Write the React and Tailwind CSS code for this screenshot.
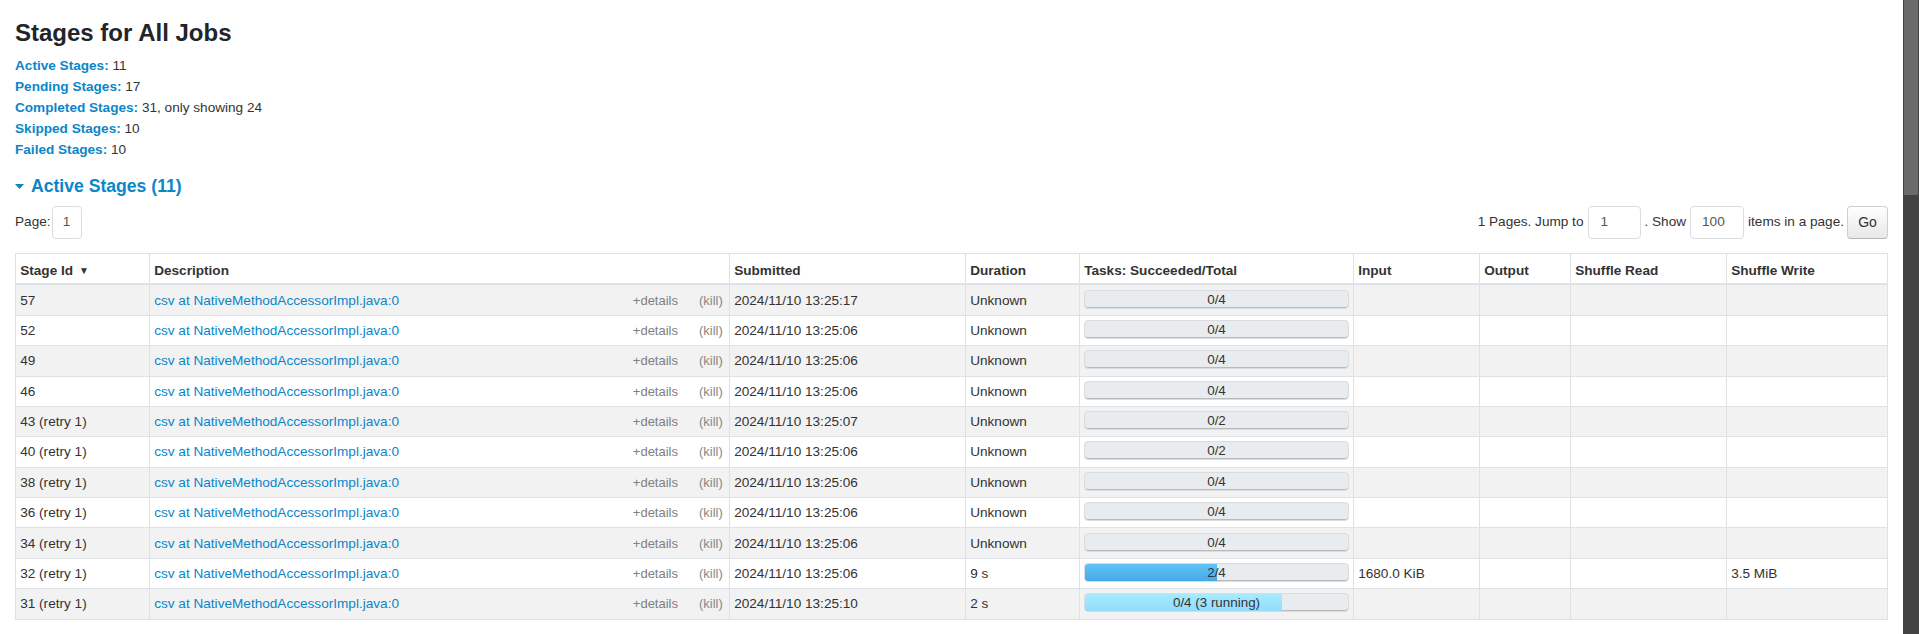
import React from "react";

const rows = [
  { id: "57", time: "2024/11/10 13:25:17", dur: "Unknown", tasks: "0/4" },
  { id: "52", time: "2024/11/10 13:25:06", dur: "Unknown", tasks: "0/4" },
  { id: "49", time: "2024/11/10 13:25:06", dur: "Unknown", tasks: "0/4" },
  { id: "46", time: "2024/11/10 13:25:06", dur: "Unknown", tasks: "0/4" },
  { id: "43 (retry 1)", time: "2024/11/10 13:25:07", dur: "Unknown", tasks: "0/2" },
  { id: "40 (retry 1)", time: "2024/11/10 13:25:06", dur: "Unknown", tasks: "0/2" },
  { id: "38 (retry 1)", time: "2024/11/10 13:25:06", dur: "Unknown", tasks: "0/4" },
  { id: "36 (retry 1)", time: "2024/11/10 13:25:06", dur: "Unknown", tasks: "0/4" },
  { id: "34 (retry 1)", time: "2024/11/10 13:25:06", dur: "Unknown", tasks: "0/4" },
  { id: "32 (retry 1)", time: "2024/11/10 13:25:06", dur: "9 s", tasks: "2/4", done: 50, input: "1680.0 KiB", sw: "3.5 MiB" },
  { id: "31 (retry 1)", time: "2024/11/10 13:25:10", dur: "2 s", tasks: "0/4 (3 running)", running: 75 },
];

const summary = [
  ["Active Stages:", "11"],
  ["Pending Stages:", "17"],
  ["Completed Stages:", "31, only showing 24"],
  ["Skipped Stages:", "10"],
  ["Failed Stages:", "10"],
];

const headers = [
  "Stage Id",
  "Description",
  "Submitted",
  "Duration",
  "Tasks: Succeeded/Total",
  "Input",
  "Output",
  "Shuffle Read",
  "Shuffle Write",
];
const widths = [134, 580, 236, 114, 274, 126, 91, 156, 161];

function Progress({ text, done, running }) {
  return (
    <div className="relative h-[19px] rounded-[4px] bg-[#e9ecef] border border-[#dadde0] shadow-[inset_0_-1px_0_#b8bbbe] overflow-hidden">
      {done ? (
        <div
          className="absolute left-0 top-0 bottom-0 bg-gradient-to-b from-[#60c4f9] to-[#46a8e6]"
          style={{ width: `${done}%` }}
        />
      ) : null}
      {running ? (
        <div
          className="absolute left-0 top-0 bottom-0 bg-gradient-to-b from-[#a6ebfe] to-[#94dcfc]"
          style={{ width: `${running}%` }}
        />
      ) : null}
      <div className="relative text-center leading-[18px] text-[13.4px] text-[#333]">{text}</div>
    </div>
  );
}

export default function App() {
  const link = "text-[#0a86c9]";
  const cellBase = "border border-[#dee2e6] px-[4.2px] leading-[21px] align-top";
  const cell = `${cellBase} py-[4.2px]`;
  return (
    <div className="flex h-[634px] overflow-hidden bg-white [font-family:'Liberation_Sans',Arial,sans-serif] text-[13.6px] text-[#333]">
      <div className="flex-1 min-w-0 px-[15px] pt-[18px]">
        <h3 className="text-[24px] font-bold leading-[29px] text-[#212529] mb-[8px]">Stages for All Jobs</h3>
        <ul>
          {summary.map(([k, v]) => (
            <li key={k} className="leading-[21px]">
              <span className={`${link} font-bold`}>{k}</span> {v}
            </li>
          ))}
        </ul>
        <div className={`mt-[14px] flex items-center h-[24px] ${link}`}>
          <svg width="9" height="6" viewBox="0 0 9 6" className="mr-[7px] mt-[2px]">
            <polygon points="0,0 9,0 4.5,5" fill="#0a86c9" />
          </svg>
          <span className="text-[17.6px] font-bold">Active Stages (11)</span>
        </div>
        <div className="mt-[8px] flex items-center h-[33px]">
          <span>Page:</span>
          <div className="ml-[1px] w-[30px] h-[33px] rounded-[4px] border border-[#d9dde1] flex items-center justify-center text-[#555]">
            1
          </div>
          <div className="ml-auto flex items-center h-[33px]">
            <span>1 Pages. Jump to</span>
            <div className="ml-[5px] w-[53px] h-[33px] rounded-[4px] border border-[#d9dde1] flex items-center pl-[11px] text-[#555]">
              1
            </div>
            <span className="ml-[3px]">. Show</span>
            <div className="ml-[4px] w-[54px] h-[33px] rounded-[4px] border border-[#d9dde1] flex items-center pl-[11px] text-[#555]">
              100
            </div>
            <span className="ml-[4px]">items in a page.</span>
            <div className="ml-[3px] w-[41px] h-[33px] rounded-[4px] border border-[#cfcfcf] border-b-[#b5b5b5] bg-gradient-to-b from-white to-[#e8e8e8] flex items-center justify-center text-[#333] text-[14px]">
              Go
            </div>
          </div>
        </div>
        <table className="mt-[14px] table-fixed border-collapse w-[1872px]">
          <colgroup>
            {widths.map((w, i) => (
              <col key={i} style={{ width: w }} />
            ))}
          </colgroup>
          <thead>
            <tr>
              {headers.map((h, i) => (
                <th
                  key={h}
                  className={`${cellBase} pt-[5.8px] pb-[2.6px] border-b-2 text-left font-bold text-[#333] whitespace-nowrap`}
                >
                  {h}
                  {i === 0 ? <span className="ml-[6px] text-[10px] align-[1px]">▼</span> : null}
                </th>
              ))}
            </tr>
          </thead>
          <tbody>
            {rows.map((r, i) => (
              <tr key={i} className={i % 2 === 0 ? "bg-[#f2f2f2]" : "bg-white"}>
                <td className={cell}>{r.id}</td>
                <td className={cell}>
                  <div className="flex">
                    <span className={link}>csv at NativeMethodAccessorImpl.java:0</span>
                    <span className="ml-auto text-[13px] text-[#808080]">+details</span>
                    <span className="ml-[21px] mr-[2px] text-[13px] text-[#888]">(kill)</span>
                  </div>
                </td>
                <td className={cell}>{r.time}</td>
                <td className={cell}>{r.dur}</td>
                <td className={cell}>
                  <Progress text={r.tasks} done={r.done} running={r.running} />
                </td>
                <td className={cell}>{r.input || ""}</td>
                <td className={cell}></td>
                <td className={cell}></td>
                <td className={cell}>{r.sw || ""}</td>
              </tr>
            ))}
          </tbody>
        </table>
      </div>
      <div className="w-[16px] shrink-0 bg-[#424242]">
        <div className="mx-[1px] h-[195px] bg-[#6a6a6a]" />
      </div>
    </div>
  );
}
